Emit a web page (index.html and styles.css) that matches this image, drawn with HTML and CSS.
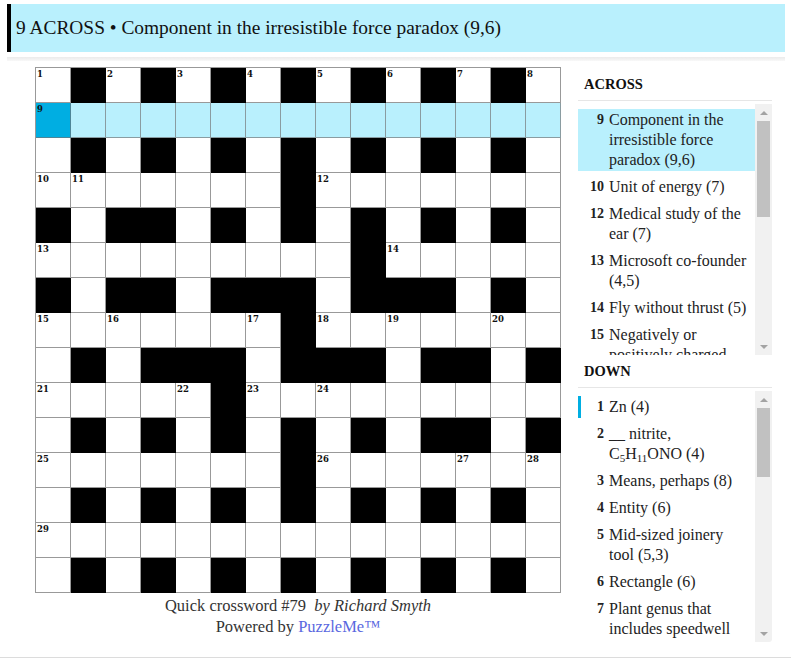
FILE: index.html
```html
<!DOCTYPE html>
<html lang="en">
<head>
<meta charset="utf-8">
<title>Quick crossword #79</title>
<link rel="stylesheet" href="styles.css">
</head>
<body>
<div class="page">
  <div class="bar">9 ACROSS • Component in the irresistible force paradox (9,6)</div>
  <div class="shade"></div>
  <div class="main">
    <div class="board">
      <div class="grid">
        <!-- row 0 -->
        <div class="c"><span class="cn">1</span></div><div class="c b"></div><div class="c"><span class="cn">2</span></div><div class="c b"></div><div class="c"><span class="cn">3</span></div><div class="c b"></div><div class="c"><span class="cn">4</span></div><div class="c b"></div><div class="c"><span class="cn">5</span></div><div class="c b"></div><div class="c"><span class="cn">6</span></div><div class="c b"></div><div class="c"><span class="cn">7</span></div><div class="c b"></div><div class="c"><span class="cn">8</span></div>
        <!-- row 1 -->
        <div class="c cur"><span class="cn">9</span></div><div class="c hl"></div><div class="c hl"></div><div class="c hl"></div><div class="c hl"></div><div class="c hl"></div><div class="c hl"></div><div class="c hl"></div><div class="c hl"></div><div class="c hl"></div><div class="c hl"></div><div class="c hl"></div><div class="c hl"></div><div class="c hl"></div><div class="c hl"></div>
        <!-- row 2 -->
        <div class="c"></div><div class="c b"></div><div class="c"></div><div class="c b"></div><div class="c"></div><div class="c b"></div><div class="c"></div><div class="c b"></div><div class="c"></div><div class="c b"></div><div class="c"></div><div class="c b"></div><div class="c"></div><div class="c b"></div><div class="c"></div>
        <!-- row 3 -->
        <div class="c"><span class="cn">10</span></div><div class="c"><span class="cn">11</span></div><div class="c"></div><div class="c"></div><div class="c"></div><div class="c"></div><div class="c"></div><div class="c b"></div><div class="c"><span class="cn">12</span></div><div class="c"></div><div class="c"></div><div class="c"></div><div class="c"></div><div class="c"></div><div class="c"></div>
        <!-- row 4 -->
        <div class="c b"></div><div class="c"></div><div class="c b"></div><div class="c b"></div><div class="c"></div><div class="c b"></div><div class="c"></div><div class="c b"></div><div class="c"></div><div class="c b"></div><div class="c"></div><div class="c b"></div><div class="c"></div><div class="c b"></div><div class="c"></div>
        <!-- row 5 -->
        <div class="c"><span class="cn">13</span></div><div class="c"></div><div class="c"></div><div class="c"></div><div class="c"></div><div class="c"></div><div class="c"></div><div class="c"></div><div class="c"></div><div class="c b"></div><div class="c"><span class="cn">14</span></div><div class="c"></div><div class="c"></div><div class="c"></div><div class="c"></div>
        <!-- row 6 -->
        <div class="c b"></div><div class="c"></div><div class="c b"></div><div class="c b"></div><div class="c"></div><div class="c b"></div><div class="c b"></div><div class="c b"></div><div class="c"></div><div class="c b"></div><div class="c b"></div><div class="c b"></div><div class="c"></div><div class="c b"></div><div class="c"></div>
        <!-- row 7 -->
        <div class="c"><span class="cn">15</span></div><div class="c"></div><div class="c"><span class="cn">16</span></div><div class="c"></div><div class="c"></div><div class="c"></div><div class="c"><span class="cn">17</span></div><div class="c b"></div><div class="c"><span class="cn">18</span></div><div class="c"></div><div class="c"><span class="cn">19</span></div><div class="c"></div><div class="c"></div><div class="c"><span class="cn">20</span></div><div class="c"></div>
        <!-- row 8 -->
        <div class="c"></div><div class="c b"></div><div class="c"></div><div class="c b"></div><div class="c b"></div><div class="c b"></div><div class="c"></div><div class="c b"></div><div class="c b"></div><div class="c b"></div><div class="c"></div><div class="c b"></div><div class="c b"></div><div class="c"></div><div class="c b"></div>
        <!-- row 9 -->
        <div class="c"><span class="cn">21</span></div><div class="c"></div><div class="c"></div><div class="c"></div><div class="c"><span class="cn">22</span></div><div class="c b"></div><div class="c"><span class="cn">23</span></div><div class="c"></div><div class="c"><span class="cn">24</span></div><div class="c"></div><div class="c"></div><div class="c"></div><div class="c"></div><div class="c"></div><div class="c"></div>
        <!-- row 10 -->
        <div class="c"></div><div class="c b"></div><div class="c"></div><div class="c b"></div><div class="c"></div><div class="c b"></div><div class="c"></div><div class="c b"></div><div class="c"></div><div class="c b"></div><div class="c"></div><div class="c b"></div><div class="c b"></div><div class="c"></div><div class="c b"></div>
        <!-- row 11 -->
        <div class="c"><span class="cn">25</span></div><div class="c"></div><div class="c"></div><div class="c"></div><div class="c"></div><div class="c"></div><div class="c"></div><div class="c b"></div><div class="c"><span class="cn">26</span></div><div class="c"></div><div class="c"></div><div class="c"></div><div class="c"><span class="cn">27</span></div><div class="c"></div><div class="c"><span class="cn">28</span></div>
        <!-- row 12 -->
        <div class="c"></div><div class="c b"></div><div class="c"></div><div class="c b"></div><div class="c"></div><div class="c b"></div><div class="c"></div><div class="c b"></div><div class="c"></div><div class="c b"></div><div class="c"></div><div class="c b"></div><div class="c"></div><div class="c b"></div><div class="c"></div>
        <!-- row 13 -->
        <div class="c"><span class="cn">29</span></div><div class="c"></div><div class="c"></div><div class="c"></div><div class="c"></div><div class="c"></div><div class="c"></div><div class="c"></div><div class="c"></div><div class="c"></div><div class="c"></div><div class="c"></div><div class="c"></div><div class="c"></div><div class="c"></div>
        <!-- row 14 -->
        <div class="c"></div><div class="c b"></div><div class="c"></div><div class="c b"></div><div class="c"></div><div class="c b"></div><div class="c"></div><div class="c b"></div><div class="c"></div><div class="c b"></div><div class="c"></div><div class="c b"></div><div class="c"></div><div class="c b"></div><div class="c"></div>
      </div>
      <div class="credit">
        <div>Quick crossword #79 &nbsp;<em>by Richard Smyth</em></div>
        <div>Powered by <a class="pm" href="#">PuzzleMe™</a></div>
      </div>
    </div>

    <div class="clues">
      <div class="sec-title">ACROSS</div>
      <div class="list-wrap">
        <div class="list">
          <div class="clue on"><span class="k">9</span><span class="t">Component in the irresistible force paradox (9,6)</span></div>
          <div class="clue"><span class="k">10</span><span class="t">Unit of energy (7)</span></div>
          <div class="clue"><span class="k">12</span><span class="t">Medical study of the ear&nbsp;(7)</span></div>
          <div class="clue"><span class="k">13</span><span class="t">Microsoft co&#8209;founder (4,5)</span></div>
          <div class="clue"><span class="k">14</span><span class="t">Fly without thrust (5)</span></div>
          <div class="clue"><span class="k">15</span><span class="t">Negatively or positively charged particle (3)</span></div>
          <div class="clue"><span class="k">18</span><span class="t">Element with symbol Ne (4)</span></div>
        </div>
        <div class="sb">
          <div class="arr"><span class="up"></span></div>
          <div class="track"><div class="thumb thumb-across"></div></div>
          <div class="arr"><span class="dn"></span></div>
        </div>
      </div>

      <div class="sec-title">DOWN</div>
      <div class="list-wrap">
        <div class="list">
          <div class="clue cross"><span class="k">1</span><span class="t">Zn (4)</span></div>
          <div class="clue"><span class="k">2</span><span class="t">__ nitrite, C<sub>5</sub>H<sub>11</sub>ONO&nbsp;(4)</span></div>
          <div class="clue"><span class="k">3</span><span class="t">Means, perhaps (8)</span></div>
          <div class="clue"><span class="k">4</span><span class="t">Entity (6)</span></div>
          <div class="clue"><span class="k">5</span><span class="t">Mid-sized joinery tool&nbsp;(5,3)</span></div>
          <div class="clue"><span class="k">6</span><span class="t">Rectangle (6)</span></div>
          <div class="clue"><span class="k">7</span><span class="t">Plant genus that includes speedwell (8)</span></div>
          <div class="clue"><span class="k">8</span><span class="t">Ancient Greek dialect (5)</span></div>
        </div>
        <div class="sb sb-round">
          <div class="arr"><span class="up"></span></div>
          <div class="track"><div class="thumb thumb-down"></div></div>
          <div class="arr"><span class="dn"></span></div>
        </div>
      </div>
    </div>
  </div>
  <div class="rule"></div>
</div>
</body>
</html>
```

FILE: styles.css
```css
html, body {
  margin: 0;
  padding: 0;
  background: #fff;
}

body {
  font-family: "Liberation Serif", "Times New Roman", serif;
  color: #222;
  width: 791px;
  height: 661px;
  overflow: hidden;
}

.page {
  padding-top: 4px;
}

.bar {
  margin: 0 6px 0 7px;
  height: 48px;
  background: #b9f0fd;
  border-left: 4px solid #000;
  padding-left: 5px;
  display: flex;
  align-items: center;
  font-size: 19.4px;
  color: #111;
}

.shade {
  margin: 5px 6px 0 7px;
  height: 4px;
  background: linear-gradient(#ebebeb, #f8f8f8);
}

.main {
  display: flex;
  align-items: flex-start;
  padding-left: 35px;
  margin-top: 6px;
  height: 590px;
}

.board {
  width: 526px;
}

.grid {
  display: grid;
  grid-template-columns: repeat(15, 35px);
  grid-auto-rows: 35px;
  border-top: 1px solid #999;
  border-left: 1px solid #999;
  width: max-content;
}

.c {
  position: relative;
  box-sizing: border-box;
  background: #fff;
  border-right: 1px solid #999;
  border-bottom: 1px solid #999;
}

.c.b {
  background: #000;
  border-color: #000;
}

.c.hl {
  background: #b9f0fd;
  border-color: #8a9ca1;
}

.c.cur {
  background: #00aee2;
  border-color: #4e8597;
}

.cn {
  position: absolute;
  top: 2px;
  left: 1px;
  font-family: "DejaVu Serif", serif;
  font-weight: bold;
  font-size: 8.5px;
  line-height: 1;
  color: #111;
}

.credit {
  margin-top: 2px;
  text-align: center;
  font-size: 16.5px;
  line-height: 21px;
  color: #333;
}

.credit em {
  font-style: italic;
}

.pm {
  color: #5a68e0;
  text-decoration: none;
}

.clues {
  margin-left: 17px;
  margin-top: 1px;
  width: 194px;
}

.sec-title {
  height: 32px;
  border-bottom: 1px solid #e6e6e6;
  padding-left: 6px;
  display: flex;
  align-items: center;
  font-weight: bold;
  font-size: 14.5px;
  color: #111;
}

.list-wrap {
  display: flex;
  height: 251px;
  margin-top: 3px;
}

.list {
  flex: 1;
  overflow: hidden;
  padding-top: 5px;
}

.clue {
  display: flex;
  align-items: flex-start;
  padding: 1px 5px 1px 0;
  margin-bottom: 5px;
  font-size: 16px;
  line-height: 20px;
  color: #222;
}

.clue.on {
  background: #b9f0fd;
}

.clue.cross {
  box-shadow: inset 3px 0 0 #00aee2;
}

.k {
  flex-shrink: 0;
  width: 20px;
  padding-left: 6px;
  margin-right: 5px;
  text-align: right;
  font-weight: bold;
  font-size: 14px;
}

.t sub {
  font-size: 11px;
  line-height: 0;
  vertical-align: -3px;
}

.sb {
  width: 17px;
  flex-shrink: 0;
  background: #f1f1f1;
  display: flex;
  flex-direction: column;
}

.sb-round {
  border-bottom-right-radius: 3px;
}

.arr {
  height: 17px;
  display: flex;
  align-items: center;
  justify-content: center;
}

.up {
  width: 0;
  height: 0;
  border-left: 4px solid transparent;
  border-right: 4px solid transparent;
  border-bottom: 4px solid #a3a3a3;
}

.dn {
  width: 0;
  height: 0;
  border-left: 4px solid transparent;
  border-right: 4px solid transparent;
  border-top: 4px solid #a3a3a3;
}

.track {
  flex: 1;
}

.thumb {
  margin: 0 2px;
  background: #c1c1c1;
}

.thumb-across {
  height: 96px;
}

.thumb-down {
  height: 69px;
}

.rule {
  margin-top: 0;
  border-top: 1px solid #dcdcdc;
}
```
